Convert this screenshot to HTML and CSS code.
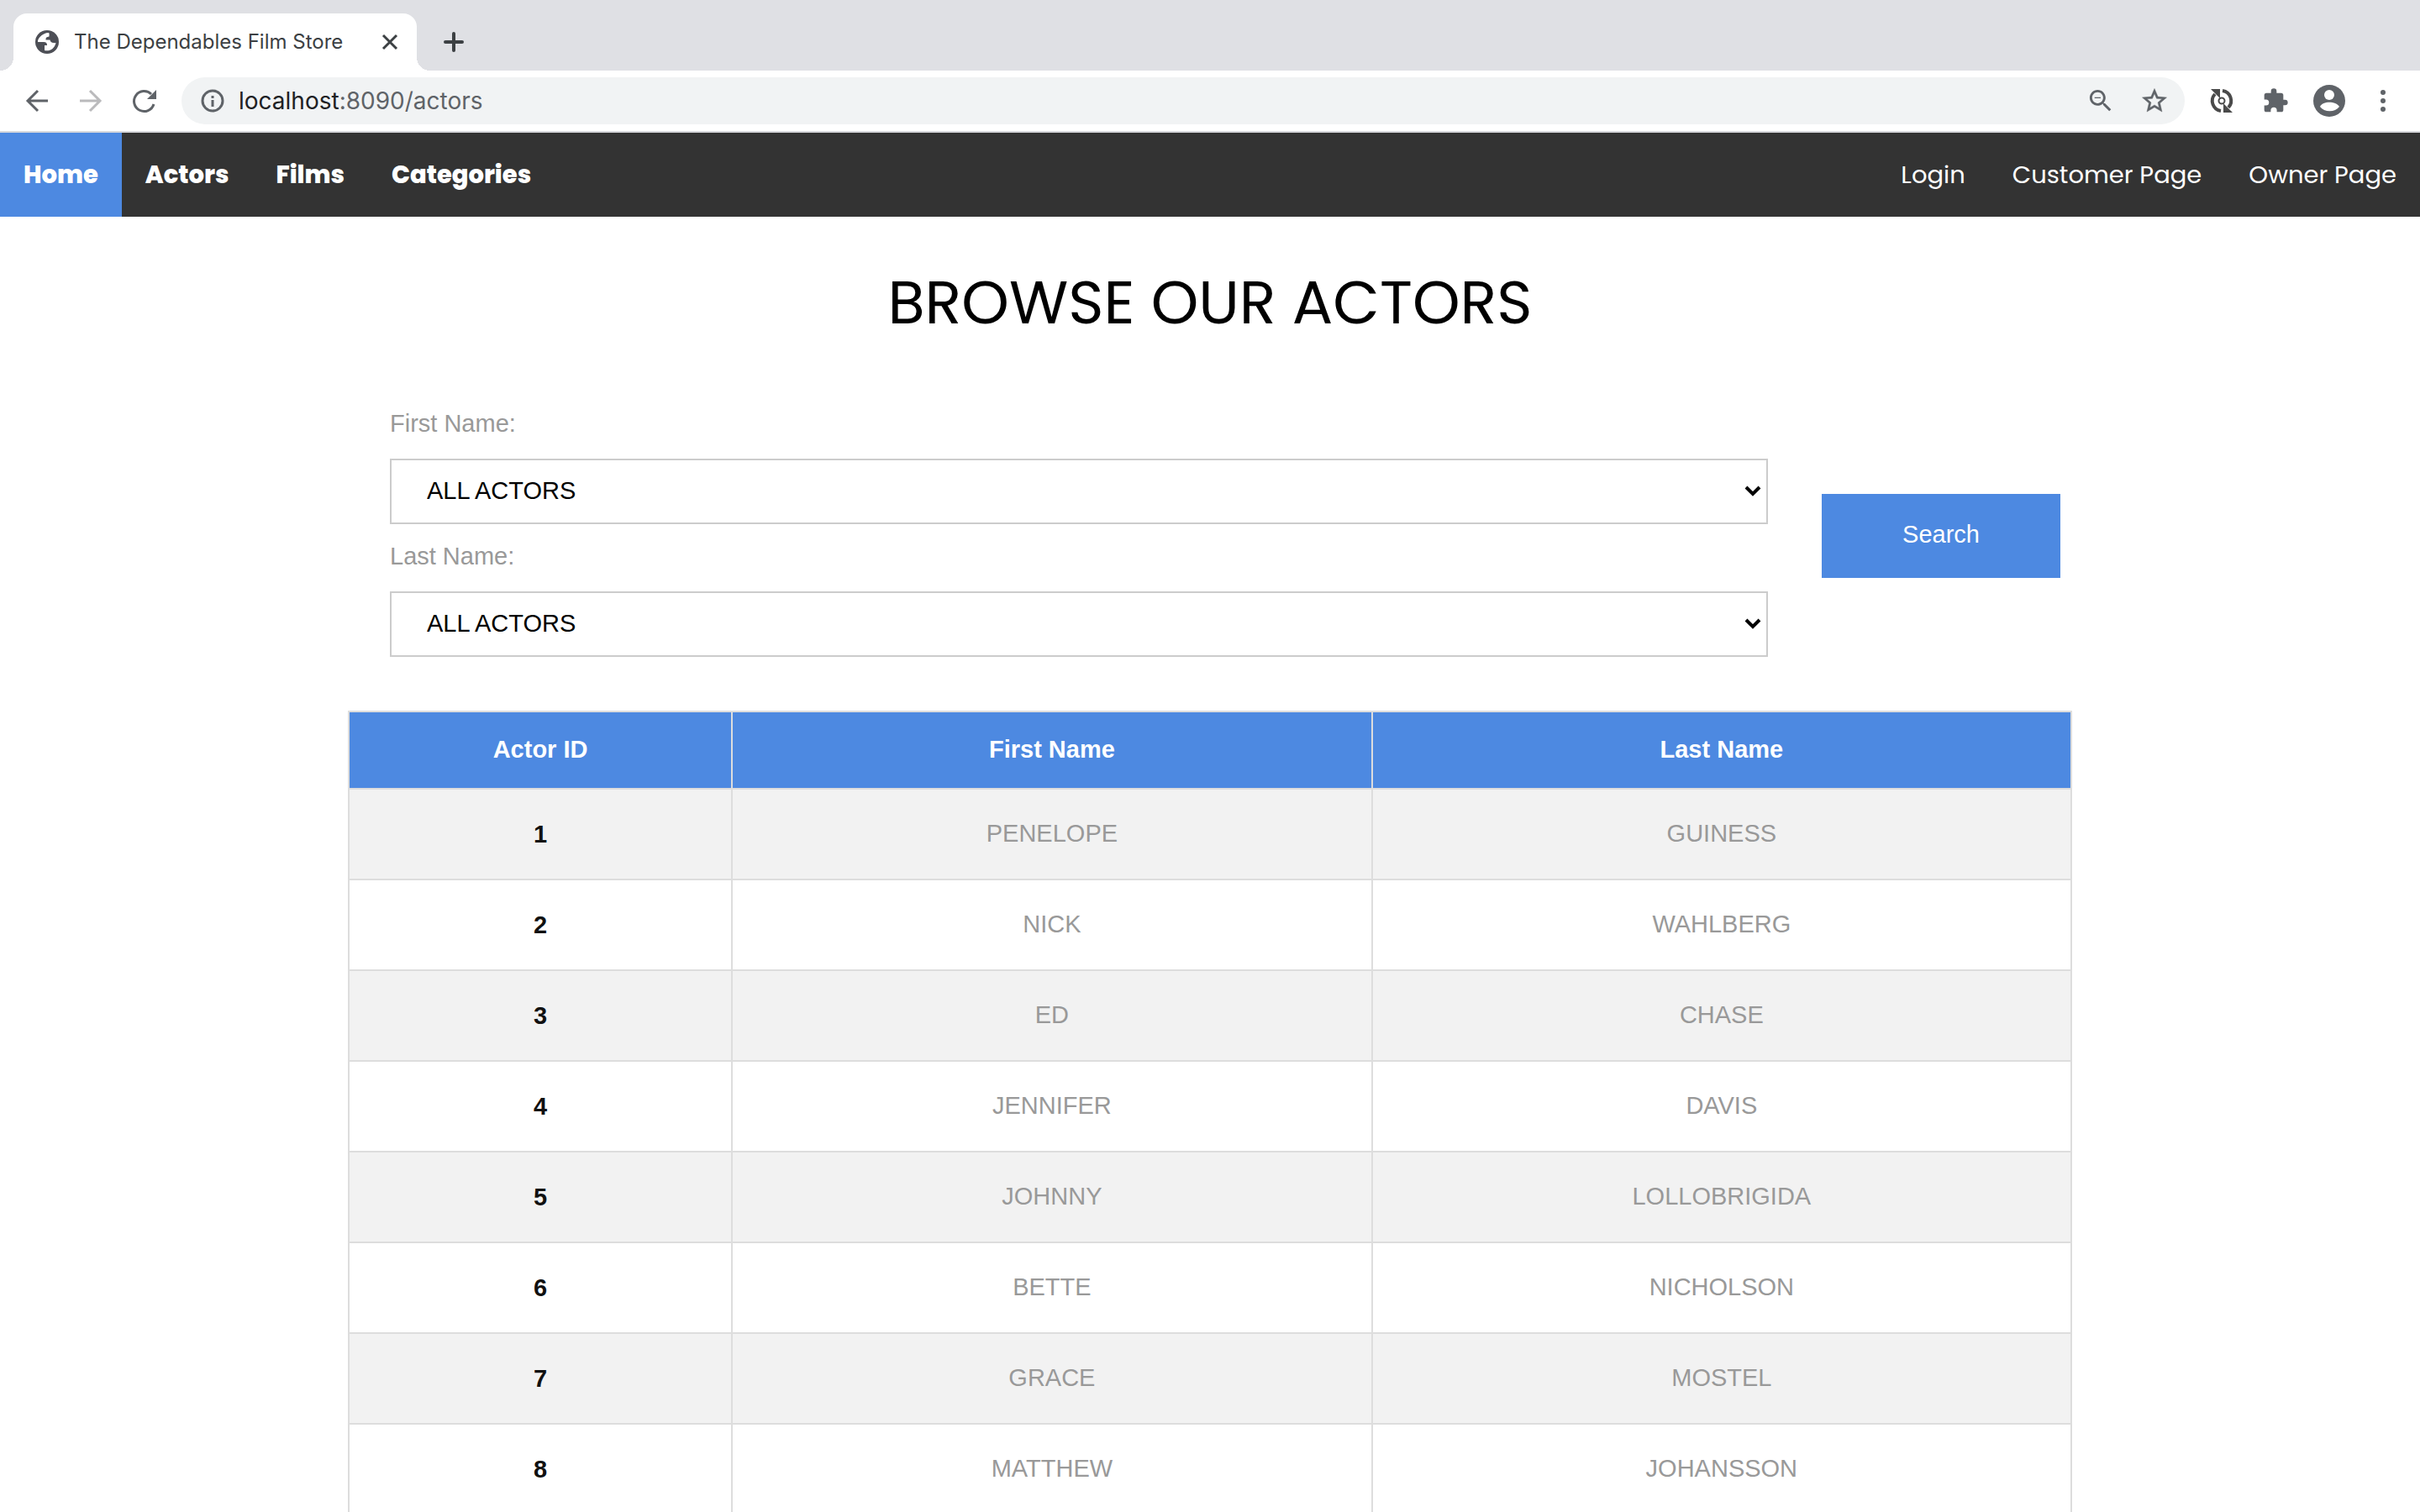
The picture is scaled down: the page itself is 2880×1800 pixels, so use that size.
FILE: index.html
```html
<!DOCTYPE html>
<html lang="en">
<head>
<meta charset="utf-8">
<title>The Dependables Film Store</title>
<link rel="stylesheet" href="styles.css">
</head>
<body>
<div class="browser">
  <header class="tab-strip">
    <div class="tab">
      <svg class="icon-32" viewBox="0 0 32 32" aria-hidden="true"><circle cx="16" cy="16" r="14" fill="#4d4f56"/><path d="M18 5c-4 0-8 2-10.500 5C5 13 5 14 5 16h7c3 0 4 1.500 4 4h-3v6c6 1.500 12-2 13.500-9H24c-3 0-4-1.500-4.500-3.500h-5c0-3 1-3.500 4-4C18.500 7 19 6 18 5z" fill="#fff"/></svg>
      <span class="tab-title">The Dependables Film Store</span>
      <button class="icon-button" aria-label="Close tab"><svg class="icon-20" viewBox="0 0 20 20"><path d="M2 2l16 16M18 2L2 18" fill="none" stroke="#3c4043" stroke-width="3"/></svg></button>
    </div>
    <button class="icon-button" aria-label="New tab"><svg class="icon-24" viewBox="0 0 24 24"><path d="M12 2v20M2 12h20" fill="none" stroke="#3c4043" stroke-width="4" stroke-linecap="round"/></svg></button>
  </header>

  <div class="toolbar">
    <div class="history">
      <button class="icon-button" aria-label="Back"><svg class="icon-32" viewBox="0 0 32 32"><path d="M29 16H5M17 4L5 16l12 12" fill="none" stroke="#5f6368" stroke-width="3"/></svg></button>
      <button class="icon-button" aria-label="Forward"><svg class="icon-32" viewBox="0 0 32 32"><path d="M3 16h24M15 4l12 12-12 12" fill="none" stroke="#bababc" stroke-width="3"/></svg></button>
      <button class="icon-button" aria-label="Reload"><svg class="icon-32" viewBox="0 0 32 32"><path d="M27 20A12 12 0 1 1 24 8" fill="none" stroke="#5f6368" stroke-width="3"/><path d="M30 3v11H19z" fill="#5f6368"/></svg></button>
    </div>
    <div class="address-bar">
      <svg class="icon-32" viewBox="0 0 32 32" aria-hidden="true"><circle cx="17" cy="16" r="12" fill="none" stroke="#5f6368" stroke-width="3"/><path d="M17 15v8M17 10v3" stroke="#5f6368" stroke-width="3"/></svg>
      <span class="url"><span class="url-host">localhost</span>:8090/actors</span>
      <button class="icon-button" aria-label="Zoom"><svg class="icon-32" viewBox="1 1 22 22"><path d="M15.5 14h-.79l-.28-.27C15.41 12.59 16 11.11 16 9.5 16 5.91 13.09 3 9.5 3S3 5.91 3 9.5 5.91 16 9.5 16c1.61 0 3.09-.59 4.23-1.57l.27.28v.79l5 4.99L20.49 19l-4.99-5zm-6 0C7.01 14 5 11.99 5 9.5S7.01 5 9.5 5 14 7.01 14 9.5 11.99 14 9.5 14zM7 9h5v1H7z" fill="#5f6368"/></svg></button>
      <button class="icon-button" aria-label="Bookmark"><svg class="icon-32" viewBox="1 1 22 22"><path d="M22 9.24l-7.19-.62L12 2 9.19 8.63 2 9.24l5.46 4.73L5.82 21 12 17.27 18.18 21l-1.63-7.03L22 9.24zM12 15.4l-3.76 2.27 1-4.28-3.32-2.88 4.38-.38L12 6.1l1.71 4.04 4.38.38-3.32 2.88 1 4.28L12 15.4z" fill="#5f6368" stroke="#5f6368" stroke-width=".3"/></svg></button>
    </div>
    <div class="extensions">
      <button class="icon-button" aria-label="Sync extension"><svg class="icon-32" viewBox="0 0 32 32"><path d="M8 8A12 12 0 0 0 15 28M24 24A12 12 0 0 0 17 4" fill="none" stroke="#4a4a4a" stroke-width="4"/><path d="M3 2h11v11zM29 30H18V19z" fill="#4a4a4a"/><circle cx="16" cy="16" r="3.500" fill="none" stroke="#4a4a4a" stroke-width="2"/></svg></button>
      <button class="icon-button" aria-label="Extensions"><svg class="icon-32" viewBox="0 0 24 24"><path d="M20.500 11H19V7a2 2 0 0 0-2-2h-4V3.500a2.500 2.500 0 0 0-5 0V5H4a2 2 0 0 0-2 2v3.800h1.500a2.700 2.700 0 0 1 0 5.400H2V20a2 2 0 0 0 2 2h3.800v-1.500a2.700 2.700 0 0 1 5.400 0V22H17a2 2 0 0 0 2-2v-4h1.500a2.500 2.500 0 0 0 0-5z" fill="#5f6368"/></svg></button>
      <button class="icon-button profile" aria-label="Profile"><svg class="icon-38" viewBox="0 0 38 38"><circle cx="19" cy="19" r="19" fill="#5f6368"/><circle cx="19" cy="12" r="6" fill="#fff"/><path d="M8 26c3-7 19-7 23 0-5 7-18 7-23 0z" fill="#fff"/></svg></button>
      <button class="icon-button" aria-label="Menu"><svg class="icon-32" viewBox="0 0 32 32"><g fill="#5f6368"><circle cx="16" cy="6" r="3"/><circle cx="16" cy="16" r="3"/><circle cx="16" cy="26" r="3"/></g></svg></button>
    </div>
  </div>

  <div class="page">
    <nav class="site-nav">
      <a class="nav-link nav-primary active" href="#">Home</a>
      <a class="nav-link nav-primary" href="#">Actors</a>
      <a class="nav-link nav-primary" href="#">Films</a>
      <a class="nav-link nav-primary" href="#">Categories</a>
      <span class="nav-spacer"></span>
      <a class="nav-link" href="#">Login</a>
      <a class="nav-link" href="#">Customer Page</a>
      <a class="nav-link" href="#">Owner Page</a>
    </nav>
    <main class="content">
      <h1 class="title">BROWSE OUR ACTORS</h1>
      <form class="search-form">
        <div class="fields">
          <label class="field-label" for="first-name">First Name:</label>
          <div class="select-box">
            <select class="field-select" id="first-name"><option>ALL ACTORS</option></select>
            <svg class="chevron" viewBox="0 0 20 14" aria-hidden="true"><path d="M2 2l8 8 8-8" fill="none" stroke="#000" stroke-width="4"/></svg>
          </div>
          <label class="field-label" for="last-name">Last Name:</label>
          <div class="select-box">
            <select class="field-select" id="last-name"><option>ALL ACTORS</option></select>
            <svg class="chevron" viewBox="0 0 20 14" aria-hidden="true"><path d="M2 2l8 8 8-8" fill="none" stroke="#000" stroke-width="4"/></svg>
          </div>
        </div>
        <button class="search-button" type="button">Search</button>
      </form>
      <table class="actors">
        <colgroup><col class="col-id"><col class="col-first"><col class="col-last"></colgroup>
        <thead>
          <tr><th scope="col">Actor ID</th><th scope="col">First Name</th><th scope="col">Last Name</th></tr>
        </thead>
        <tbody>
          <tr><th scope="row">1</th><td>PENELOPE</td><td>GUINESS</td></tr>
          <tr><th scope="row">2</th><td>NICK</td><td>WAHLBERG</td></tr>
          <tr><th scope="row">3</th><td>ED</td><td>CHASE</td></tr>
          <tr><th scope="row">4</th><td>JENNIFER</td><td>DAVIS</td></tr>
          <tr><th scope="row">5</th><td>JOHNNY</td><td>LOLLOBRIGIDA</td></tr>
          <tr><th scope="row">6</th><td>BETTE</td><td>NICHOLSON</td></tr>
          <tr><th scope="row">7</th><td>GRACE</td><td>MOSTEL</td></tr>
          <tr><th scope="row">8</th><td>MATTHEW</td><td>JOHANSSON</td></tr>
        </tbody>
      </table>
    </main>
  </div>
</div>
</body>
</html>
```
FILE: styles.css
```css
* { box-sizing: border-box; }

body {
  margin: 0;
  background: #fff;
  color: #000;
  font-family: "Liberation Sans", Arial, sans-serif;
  font-size: 29px;
}

button, select { font: inherit; }

.browser {
  display: flex;
  flex-direction: column;
  height: 100vh;
  overflow: hidden;
}

.icon-button {
  display: flex;
  align-items: center;
  padding: 0;
  border: 0;
  background: none;
}

.icon-20 { width: 20px; height: 20px; }
.icon-24 { width: 24px; height: 24px; }
.icon-32 { width: 32px; height: 32px; }
.icon-38 { width: 38px; height: 38px; }

/* Tab strip */
.tab-strip {
  display: flex;
  gap: 32px;
  padding: 16px 16px 0;
  background: #dfe0e4;
}

.tab {
  position: relative;
  display: flex;
  align-items: center;
  width: 480px;
  height: 68px;
  padding: 0 22px 0 24px;
  border-radius: 16px 16px 0 0;
  background: #fff;
}

.tab::before,
.tab::after {
  content: "";
  position: absolute;
  bottom: 0;
  width: 16px;
  height: 16px;
}

.tab::before {
  right: 100%;
  background: radial-gradient(circle at 0 0, #dfe0e4 16px, #fff 16px);
}

.tab::after {
  left: 100%;
  background: radial-gradient(circle at 100% 0, #dfe0e4 16px, #fff 16px);
}

.tab-title {
  flex: 1;
  margin-left: 16px;
  color: #3c4043;
  font-family: Inter, sans-serif;
  font-size: 24px;
  line-height: 32px;
  white-space: nowrap;
}

/* Toolbar */
.toolbar {
  display: flex;
  align-items: center;
  height: 74px;
  flex: none;
  border-bottom: 2px solid #d7d8dc;
  background: #fff;
}

.history {
  display: flex;
  gap: 32px;
  padding: 0 28px;
}

.address-bar {
  display: flex;
  flex: 1;
  align-items: center;
  gap: 32px;
  height: 56px;
  padding: 0 20px;
  border-radius: 28px;
  background: #f1f3f4;
}

.url {
  flex: 1;
  margin-left: -16px;
  color: #5f6368;
  font-family: Inter, sans-serif;
  font-size: 28px;
  line-height: 36px;
}

.url-host { color: #202124; }

.extensions {
  display: flex;
  align-items: center;
  gap: 32px;
  padding: 0 28px;
}

/* keeps the larger avatar on the same pitch as the 32px icons */
.profile { margin: 0 -3px; }

/* Site */
.page {
  flex: 1;
  min-height: 0;
  overflow: hidden;
}

.site-nav {
  display: flex;
  height: 100px;
  background: #333;
  font-family: Poppins, Inter, sans-serif;
  font-size: 29px;
}

.nav-link {
  display: flex;
  align-items: center;
  padding: 0 28px;
  color: #fff;
  text-decoration: none;
}

.nav-primary { font-weight: 800; }
.nav-link.active { background: #4d89e1; }
.nav-spacer { flex: 1; }

.content {
  max-width: 2052px;
  margin: 0 auto;
}

.title {
  margin: 0;
  padding: 58px 0 70px;
  font-family: Poppins, Inter, sans-serif;
  font-size: 72px;
  font-weight: 400;
  line-height: 88px;
  text-align: center;
}

.search-form {
  display: flex;
  align-items: flex-end;
  gap: 64px;
  padding: 0 14px 64px 50px;
}

.fields { flex: 1; }

.field-label {
  display: block;
  height: 72px;
  padding-top: 14px;
  color: #999;
  line-height: 32px;
}

.select-box { position: relative; }
.select-box + .field-label { height: 80px; padding-top: 22px; }

.field-select {
  display: block;
  width: 100%;
  height: 78px;
  padding: 0 42px 2px;
  border: 2px solid #ccc;
  border-radius: 0;
  appearance: none;
  background: #fff;
  color: #000;
}

.chevron {
  position: absolute;
  top: 32px;
  right: 8px;
  width: 20px;
  height: 14px;
  pointer-events: none;
}

.search-button {
  width: 284px;
  height: 100px;
  margin-bottom: 94px;
  padding: 0 0 4px;
  border: 0;
  background: #4d89e1;
  color: #fff;
}

.actors {
  width: 100%;
  border-collapse: collapse;
  table-layout: fixed;
  text-align: center;
}

.col-id { width: 22.25%; }
.col-first { width: 37.15%; }
.col-last { width: 40.6%; }

.actors th,
.actors td {
  height: 108px;
  padding: 0;
  border: 2px solid #ddd;
}

.actors td {
  padding-bottom: 2px;
  color: #999;
}

.actors tbody th { color: #111; }
.actors tbody tr:nth-child(odd) { background: #f2f2f2; }

.actors thead th {
  height: 92px;
  padding-bottom: 2px;
  background: #4d89e1;
  color: #fff;
}
```
